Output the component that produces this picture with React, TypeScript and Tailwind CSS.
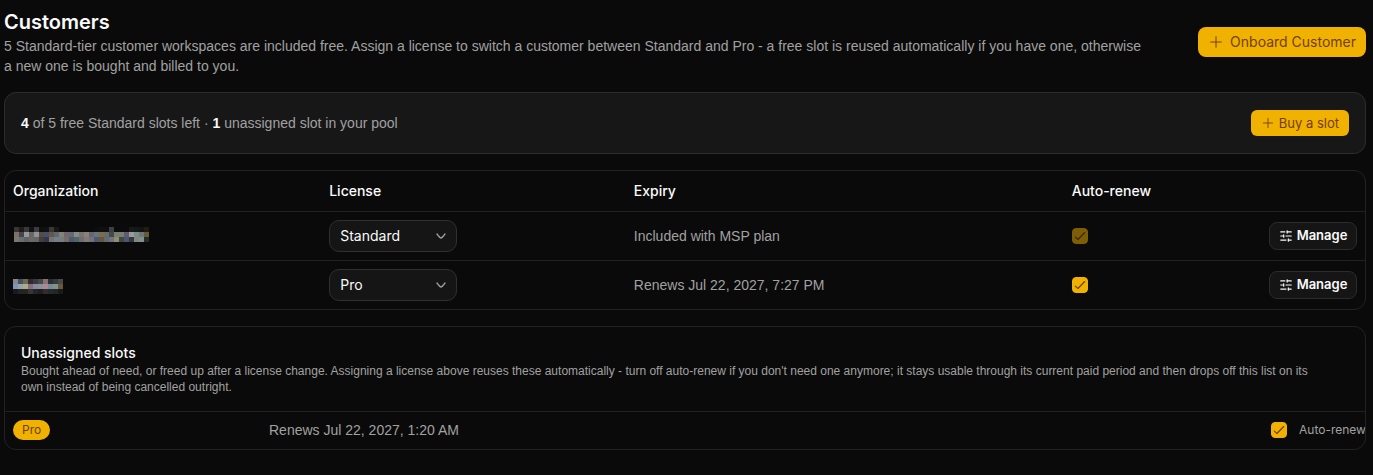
import { useState } from "react";
import { SlidersHorizontal } from "lucide-react";
import clsx from "clsx";

type License = "Standard" | "Pro";

interface Customer {
  id: string;
  label: string;
  mosaic: string[][];
  offset: { x: number; y: number };
  license: License;
  expiry: string;
  autoRenew: boolean;
  locked: boolean;
}

// redacted organization names, one colour per 5px block
const customers: Customer[] = [
  {
    id: "org-1",
    label: "First organization",
    offset: { x: 1, y: 0 },
    mosaic: [
      ["#333637", "#241b19", "#353a3c", "#161211", "#3b3c3d", "#0f0f10", "#101113", "#35393a", "#1b1614", "", "", "", "", "", "", "", "#0c0d0f", "#101011", "#0d0f10", "#3e3e3f", "", "#0b0b0e", "", "#1a1917", "#12191b", "#131414", "#1f1c14"],
      ["#82705f", "#454550", "#969899", "#666666", "#929292", "#554c43", "#465069", "#665648", "#5a6b75", "#85807a", "#716771", "#6c6670", "#858b8a", "#7b7570", "#8b8178", "#666672", "#61787d", "#806a4d", "#686a6e", "#424a4e", "#7b7c72", "#7b7b70", "#5f5a75", "#999b95", "#778d8e", "#717774", "#665a39"],
      ["#777777", "#6d6d6d", "#626262", "#6a6a6a", "#666666", "#42403f", "#333749", "#757472", "#728088", "#777c7e", "#746e68", "#4c5a70", "#4e6766", "#716b75", "#827a73", "#75717b", "#4b5971", "#65583e", "#5d6c6c", "#737281", "#8e906b", "#414743", "#4b586c", "#343844", "#87857d", "#7c9191", "#252c26"],
    ],
    license: "Standard",
    expiry: "Included with MSP plan",
    autoRenew: true,
    locked: true,
  },
  {
    id: "org-2",
    label: "Second organization",
    offset: { x: 0, y: 3 },
    mosaic: [
      ["#89878d", "#415264", "#71694b", "#32282f", "#393a3d", "#464a49", "#8d7077", "#2a2e35", "#343b3d", "#4e4642"],
      ["#8094b5", "#97a3a7", "#aaaa8c", "#85717e", "#8b899b", "#8b909b", "#aa8990", "#7b8a91", "#7e9194", "#69593b"],
      ["#19191e", "#222423", "#222524", "#373632", "#232728", "#221f21", "#302d2d", "#252a2d", "#222829", "#1b1a15"],
    ],
    license: "Pro",
    expiry: "Renews Jul 22, 2027, 7:27 PM",
    autoRenew: true,
    locked: false,
  },
];

const PlusIcon = ({ className }: { className?: string }) => (
  <svg viewBox="0 0 24 24" fill="none" stroke="currentColor" strokeWidth="1.5" strokeLinecap="round" className={className} aria-hidden="true">
    <path d="M12 4V20M20 12H4" />
  </svg>
);

const ChevronIcon = ({ className }: { className?: string }) => (
  <svg viewBox="0 0 24 24" fill="none" stroke="currentColor" strokeWidth="2" strokeLinecap="round" strokeLinejoin="round" className={className} aria-hidden="true">
    <path d="M18 9C18 9 13.58 15 12 15C10.42 15 6 9 6 9" />
  </svg>
);

const Mosaic = ({ rows, offset, label }: { rows: string[][]; offset: { x: number; y: number }; label: string }) => (
  <svg width={rows[0].length * 5 + offset.x} height={18} shapeRendering="crispEdges" role="img" aria-label={label}>
    {rows.map((row, y) =>
      row.map(
        (fill, x) =>
          fill && <rect key={`${x}-${y}`} x={x * 5 + offset.x} y={y * 5 + offset.y} width="5" height="5" fill={fill} />
      )
    )}
  </svg>
);

const Checkbox = ({ id, label, defaultChecked, disabled }: { id: string; label?: string; defaultChecked?: boolean; disabled?: boolean }) => (
  <span className={clsx("relative inline-flex size-4 shrink-0", disabled && "opacity-50")}>
    <input
      id={id}
      type="checkbox"
      aria-label={label}
      defaultChecked={defaultChecked}
      disabled={disabled}
      className="peer size-4 appearance-none rounded-sm border border-[#3a3a3a] bg-[#171717] checked:border-[#f0b100] checked:bg-[#f0b100]"
    />
    <svg
      viewBox="0 0 24 24"
      fill="none"
      stroke="#733e0a"
      strokeWidth="2"
      strokeLinecap="round"
      strokeLinejoin="round"
      className="pointer-events-none absolute inset-0 m-auto hidden size-3.5 peer-checked:block"
      aria-hidden="true"
    >
      <path d="M4 14L8.5 18L20 6" />
    </svg>
  </span>
);

const LicenseSelect = ({ value, label }: { value: License; label: string }) => {
  const [license, setLicense] = useState<string>(value);

  return (
    <div className="relative w-32">
      <select
        aria-label={label}
        value={license}
        onChange={(e) => setLicense(e.target.value)}
        className="block h-8 w-full appearance-none rounded-[10px] border border-[#303030] bg-[#151515] pl-2.5 pr-8 text-sm text-neutral-50"
      >
        <option>Standard</option>
        <option>Pro</option>
      </select>
      <ChevronIcon className="pointer-events-none absolute right-2 top-2 size-4 text-[#a1a1a1]" />
    </div>
  );
};

const App = () => {
  return (
    <main className="flex min-h-screen flex-col gap-4 bg-[#0a0a0a] py-2 pl-1 pr-[7px] font-['Inter',sans-serif] text-sm text-neutral-50">
      <header className="flex items-center justify-between gap-6">
        <div>
          <h1 className="text-xl font-semibold">Customers</h1>
          <p className="font-['Liberation_Sans',sans-serif] text-[#a1a1a1]">
            5 Standard-tier customer workspaces are included free. Assign a license to switch a customer between Standard
            and Pro - a free slot is reused automatically if you have one, otherwise <br className="hidden xl:block" />
            a new one is bought and billed to you.
          </p>
        </div>
        <button type="button" className="flex h-[30px] shrink-0 items-center gap-1.5 rounded-lg bg-[#f0b100] px-2.5 text-[#733e0a]">
          <PlusIcon className="size-4" />
          Onboard Customer
        </button>
      </header>

      <section className="flex items-center justify-between rounded-xl border border-[#2c2c2c] bg-[#171717] p-4">
        <p className="font-['Liberation_Sans',sans-serif] leading-7 text-[#a1a1a1]">
          <strong className="font-bold text-neutral-50">4</strong> of 5 free Standard slots left ·{" "}
          <strong className="font-bold text-neutral-50">1</strong> unassigned slot in your pool
        </p>
        <button type="button" className="flex h-[26px] items-center gap-1 rounded-md bg-[#f0b100] px-2.5 text-[13px] text-[#733e0a]">
          <PlusIcon className="size-3.5" />
          Buy a slot
        </button>
      </section>

      <section className="overflow-hidden rounded-xl border border-[#222222]">
        <table className="w-full table-fixed">
          <colgroup>
            <col className="w-[23.25%]" />
            <col className="w-[22.4%]" />
            <col className="w-[32.2%]" />
            <col />
            <col className="w-26" />
          </colgroup>
          <thead>
            <tr className="h-10 border-b border-[#222222] text-left">
              <th className="px-2 font-medium">Organization</th>
              <th className="px-2 font-medium">License</th>
              <th className="px-2 font-medium">Expiry</th>
              <th className="px-2 font-medium">Auto-renew</th>
              <td />
            </tr>
          </thead>
          <tbody>
            {customers.map((customer) => (
              <tr key={customer.id} className="border-b border-[#222222] last:border-b-0">
                <td className="p-2">
                  <Mosaic rows={customer.mosaic} offset={customer.offset} label={customer.label} />
                </td>
                <td className="p-2">
                  <LicenseSelect value={customer.license} label={`${customer.label} license`} />
                </td>
                <td className="p-2 font-['Liberation_Sans',sans-serif] text-[#a1a1a1]">{customer.expiry}</td>
                <td className="p-2">
                  <div className="flex">
                    <Checkbox
                      id={`${customer.id}-renew`}
                      label={`${customer.label} auto-renew`}
                      defaultChecked={customer.autoRenew}
                      disabled={customer.locked}
                    />
                  </div>
                </td>
                <td className="p-2">
                  <button type="button" className="flex h-7 w-full items-center justify-center gap-1 rounded-lg border border-[#2c2c2c] bg-[#151515] text-[13px] font-semibold">
                    <SlidersHorizontal className="size-3.5" strokeWidth={2} />
                    Manage
                  </button>
                </td>
              </tr>
            ))}
          </tbody>
        </table>
      </section>

      <section className="overflow-hidden rounded-xl border border-[#222222]">
        <div className="border-b border-[#222222] p-4">
          <h2 className="font-medium">Unassigned slots</h2>
          <p className="font-['Liberation_Sans',sans-serif] text-xs text-[#a1a1a1]">
            Bought ahead of need, or freed up after a license change. Assigning a license above reuses these automatically -
            turn off auto-renew if you don't need one anymore; it stays usable through its current paid period and then drops
            off this list on its <br className="hidden xl:block" />
            own instead of being cancelled outright.
          </p>
        </div>
        <table className="w-full table-fixed">
          <colgroup>
            <col className="w-64" />
            <col />
            <col className="w-[102px]" />
          </colgroup>
          <tbody>
            <tr className="h-[37px] text-[#a1a1a1]">
              <td className="px-2">
                <span className="flex h-5 w-fit items-center rounded-full bg-[#f0b100] px-[9px] text-xs text-[#733e0a]">Pro</span>
              </td>
              <td className="px-2 font-['Liberation_Sans',sans-serif]">Renews Jul 22, 2027, 1:20 AM</td>
              <td className="pl-2">
                <div className="flex items-center gap-3">
                  <Checkbox id="slot-renew" defaultChecked />
                  <label htmlFor="slot-renew" className="whitespace-nowrap text-xs">Auto-renew</label>
                </div>
              </td>
            </tr>
          </tbody>
        </table>
      </section>
    </main>
  );
};

export default App;
